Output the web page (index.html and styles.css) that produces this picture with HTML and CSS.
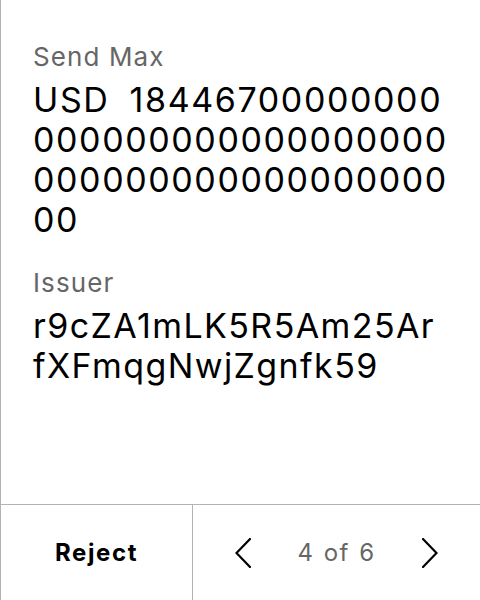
FILE: index.html
```html
<!DOCTYPE html>
<html>
<head>
<meta charset="utf-8">
<link rel="stylesheet" href="styles.css">
</head>
<body>
<div class="screen">
  <div class="content">
    <div class="field">
      <div class="label">Send Max</div>
      <div class="value amount">USD 1844670000000000000000000000000000000000000000000000</div>
    </div>
    <div class="field">
      <div class="label">Issuer</div>
      <div class="value address">r9cZA1mLK5R5Am25ArfXFmqgNwjZgnfk59</div>
    </div>
  </div>
  <div class="footer">
    <div class="reject">Reject</div>
    <div class="pager">
      <svg class="chev" width="16" height="30" viewBox="0 0 16 30"><polyline points="15,1 1.5,15 15,29" fill="none" stroke="#000" stroke-width="2.2" stroke-linecap="round" stroke-linejoin="miter"/></svg>
      <span class="count">4 of 6</span>
      <svg class="chev" width="16" height="30" viewBox="0 0 16 30"><polyline points="1,1 14.5,15 1,29" fill="none" stroke="#000" stroke-width="2.2" stroke-linecap="round" stroke-linejoin="miter"/></svg>
    </div>
  </div>
</div>
</body>
</html>
```
FILE: styles.css
```css
html, body {
  margin: 0;
  padding: 0;
  background: #fff;
}
body {
  font-family: Inter, "Noto Sans", sans-serif;
  color: #000;
}
.screen {
  width: 480px;
  height: 600px;
  box-sizing: border-box;
  border-left: 1px solid #b3b3b3;
  display: flex;
  flex-direction: column;
}
.content {
  flex: 1;
  padding: 41px 32px 0 32px;
  display: flex;
  flex-direction: column;
  gap: 27px;
}
.field {
  display: flex;
  flex-direction: column;
  gap: 7px;
}
.label {
  font-size: 26px;
  line-height: 32px;
  letter-spacing: 1.1px;
  color: #666;
}
.value {
  font-size: 34px;
  line-height: 40px;
  word-break: break-all;
}
.amount {
  width: 418px;
  letter-spacing: 1.6px;
  word-spacing: 9px;
}
.address {
  width: 410px;
  letter-spacing: 1.4px;
}
.footer {
  height: 96px;
  flex: none;
  box-sizing: border-box;
  border-top: 1px solid #b3b3b3;
  display: grid;
  grid-template-columns: 192px 1fr;
}
.reject {
  border-right: 1px solid #b3b3b3;
  display: flex;
  align-items: center;
  justify-content: center;
  font-size: 24px;
  font-weight: 700;
  letter-spacing: 1.6px;
}
.pager {
  display: flex;
  align-items: center;
  justify-content: center;
  gap: 46px;
}
.count {
  font-size: 24px;
  letter-spacing: 1.5px;
  word-spacing: 1px;
  color: #666;
}
.chev {
  display: block;
}
```
